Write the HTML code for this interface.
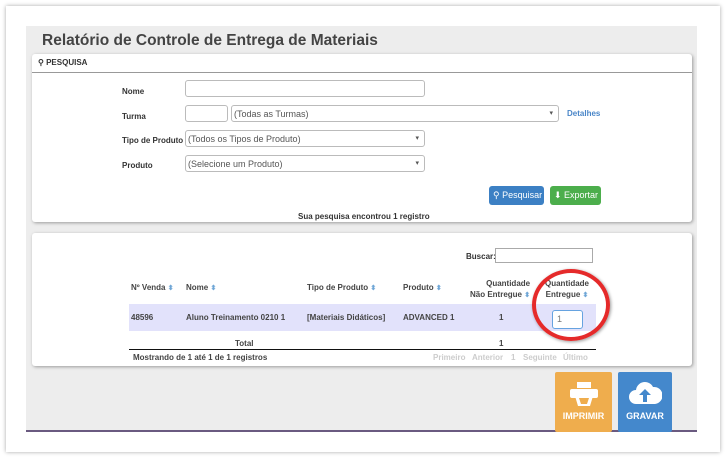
<!DOCTYPE html>
<html><head><meta charset="utf-8"><style>
*{box-sizing:border-box;margin:0;padding:0}
body{width:726px;height:459px;background:#fff;font-family:"Liberation Sans",sans-serif;position:relative;overflow:hidden;color:#333}
.outer{position:absolute;left:6px;top:6px;width:714px;height:446px;background:#fff;box-shadow:0 0 4px rgba(0,0,0,.35)}
.gray{position:absolute;left:26px;top:26px;width:671px;height:406px;background:#ededed;border-bottom:2px solid #6a5a80}
.t{position:absolute;left:42px;top:32px;font-size:15.5px;font-weight:bold;color:#444}
.card{position:absolute;background:#fff;border-radius:3px;box-shadow:1px 1px 3px rgba(0,0,0,.35)}
.a{position:absolute;font-size:8px;font-weight:bold;color:#333}
.in{position:absolute;border:1px solid #bbb;border-radius:3px;background:#fff;font-size:9px;color:#555;padding:3px 2px 0;height:17px}
.dd::after{content:"▾";position:absolute;right:5px;top:3px;font-size:7px;color:#555}
.btn{position:absolute;height:19px;border-radius:3px;color:#fff;font-size:9px;line-height:19px;padding-left:4px}
.h{position:absolute;font-size:8px;font-weight:bold;color:#444}
.s{color:#6fa6d6;font-size:7px}
.p{position:absolute;top:353px;font-size:8px;color:#ccc;font-weight:bold}
</style></head><body>
<div class="outer"></div>
<div class="gray"></div>
<div class="t">Relatório de Controle de Entrega de Materiais</div>
<div class="card" style="left:32px;top:54px;width:660px;height:168px">
 <div style="height:19px;border-bottom:1px solid #999;font-size:8px;font-weight:bold;padding:4px 0 0 6px">⚲ PESQUISA</div>
</div>
<div class="a" style="left:122px;top:87px">Nome</div>
<div class="in" style="left:185px;top:80px;width:240px"></div>
<div class="a" style="left:122px;top:112px">Turma</div>
<div class="in" style="left:185px;top:105px;width:43px"></div>
<div class="in dd" style="left:231px;top:105px;width:328px">(Todas as Turmas)</div>
<div style="position:absolute;left:567px;top:109px;font-size:8px;font-weight:bold;color:#4a86c8">Detalhes</div>
<div class="a" style="left:122px;top:136px">Tipo de Produto</div>
<div class="in dd" style="left:185px;top:130px;width:240px">(Todos os Tipos de Produto)</div>
<div class="a" style="left:122px;top:161px">Produto</div>
<div class="in dd" style="left:185px;top:155px;width:240px">(Selecione um Produto)</div>
<div class="btn" style="left:489px;top:186px;width:55px;background:#3c80c4">⚲ Pesquisar</div>
<div class="btn" style="left:550px;top:186px;width:51px;background:#4cae4c">⬇ Exportar</div>
<div class="a" style="left:298px;top:212px">Sua pesquisa encontrou 1 registro</div>
<div class="card" style="left:32px;top:233px;width:660px;height:133px"></div>
<div class="a" style="left:466px;top:252px">Buscar:</div>
<div style="position:absolute;left:495px;top:248px;width:98px;height:15px;border:1px solid #aaa"></div>
<div class="h" style="left:131px;top:283px">Nº Venda <span class="s">⬍</span></div>
<div class="h" style="left:186px;top:283px">Nome <span class="s">⬍</span></div>
<div class="h" style="left:307px;top:283px">Tipo de Produto <span class="s">⬍</span></div>
<div class="h" style="left:403px;top:283px">Produto <span class="s">⬍</span></div>
<div class="h" style="left:470px;top:278px;text-align:right;line-height:11px">Quantidade<br>Não Entregue <span class="s">⬍</span></div>
<div class="h" style="left:545px;top:278px;text-align:center;line-height:11px">Quantidade<br>Entregue <span class="s">⬍</span></div>
<div style="position:absolute;left:129px;top:304px;width:467px;height:27px;background:#e2e2fb"></div>
<div class="h" style="left:131px;top:313px">48596</div>
<div class="h" style="left:186px;top:313px">Aluno Treinamento 0210 1</div>
<div class="h" style="left:307px;top:313px">[Materiais Didáticos]</div>
<div class="h" style="left:403px;top:313px">ADVANCED 1</div>
<div class="h" style="left:499px;top:313px">1</div>
<div style="position:absolute;left:552px;top:310px;width:31px;height:19px;border:1px solid #66a3e0;border-radius:3px;background:#fff;font-size:9px;color:#777;padding:3px 4px">1</div>
<div style="position:absolute;left:532px;top:269px;width:78px;height:72px;border:4px solid #e52a2a;border-radius:50%;box-shadow:1px 1px 3px rgba(0,0,0,.4)"></div>
<div class="h" style="left:235px;top:339px">Total</div>
<div class="h" style="left:499px;top:339px">1</div>
<div style="position:absolute;left:129px;top:349px;width:467px;height:1px;background:#111"></div>
<div class="h" style="left:133px;top:353px">Mostrando de 1 até 1 de 1 registros</div>
<div class="p" style="left:433px">Primeiro</div><div class="p" style="left:472px">Anterior</div><div class="p" style="left:511px">1</div><div class="p" style="left:523px">Seguinte</div><div class="p" style="left:563px">Último</div>
<div style="position:absolute;left:555px;top:372px;width:57px;height:60px;background:#efad4d;border-radius:2px;color:#fff;font-size:9px;font-weight:bold;text-align:center">
<svg width="30" height="26" viewBox="0 0 30 26" style="margin-top:10px"><rect x="8" y="0" width="14" height="6" fill="#fff"/><rect x="1" y="7" width="28" height="9" rx="2" fill="#fff"/><path d="M6 14h18l-3 10H9z" fill="#fff"/><path d="M10 16h10l-2 6h-6z" fill="#efad4d"/></svg>
<div style="margin-top:1px">IMPRIMIR</div></div>
<div style="position:absolute;left:618px;top:372px;width:54px;height:60px;background:#4488cc;border-radius:2px;color:#fff;font-size:9px;font-weight:bold;text-align:center">
<svg width="34" height="26" viewBox="0 0 34 26" style="margin-top:8px"><path d="M8 24a7 7 0 0 1 0-14a9 9 0 0 1 17-3a8 8 0 0 1 2 17z" fill="#fff"/><path d="M17 9l-6 6h4v7h4v-7h4z" fill="#4488cc"/></svg>
<div style="margin-top:3px">GRAVAR</div></div>
</body></html>
